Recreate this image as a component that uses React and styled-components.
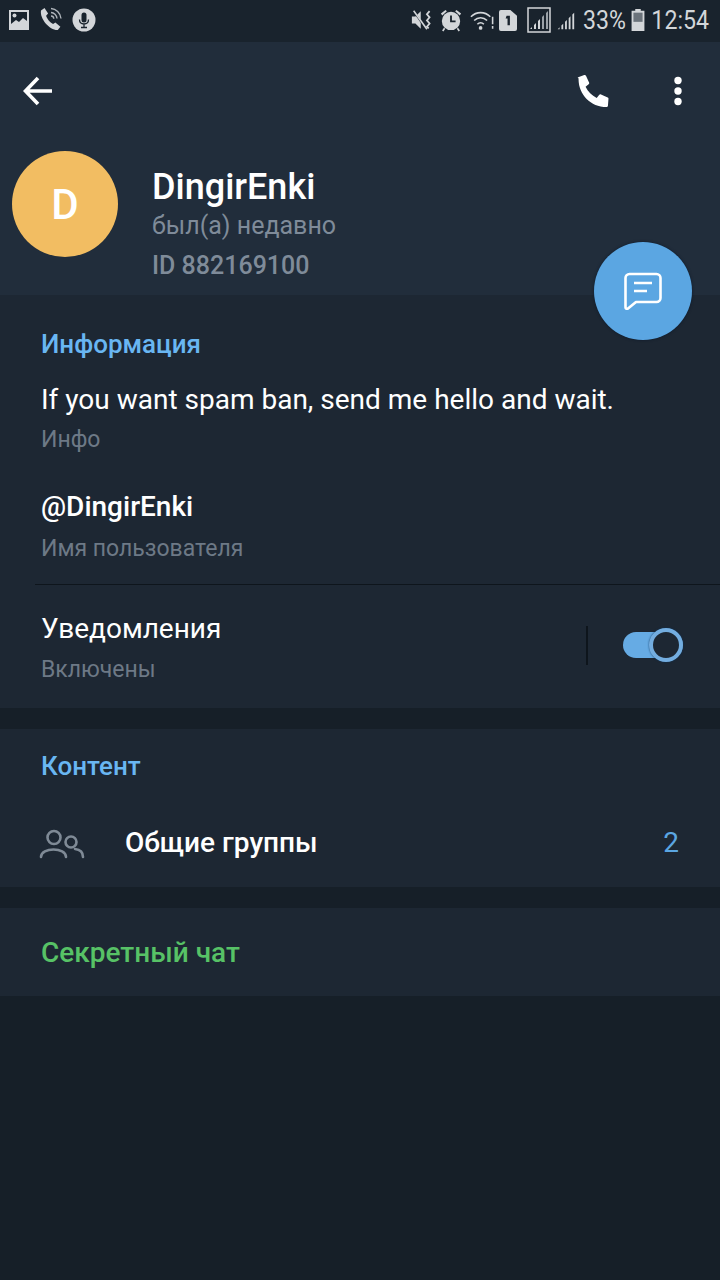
import styled, { createGlobalStyle } from 'styled-components';

const GlobalStyle = createGlobalStyle`
  html, body {
    margin: 0;
    padding: 0;
    background: #161f28;
  }
  * {
    box-sizing: border-box;
  }
`;

const Screen = styled.div`
  position: relative;
  width: 720px;
  height: 1280px;
  overflow: hidden;
  background: #161f28;
  font-family: Roboto, "Noto Sans", sans-serif;
  color: #fff;
`;

const StatusBar = styled.div`
  display: flex;
  align-items: center;
  justify-content: space-between;
  height: 42px;
  padding: 0 11px 2px 8px;
  background: #19232d;
  color: #d3d6d9;
`;

const StatusGroup = styled.div`
  display: flex;
  align-items: center;
  gap: ${props => props.$gap || 0}px;
`;

const StatusSlot = styled.span`
  display: flex;
  margin-left: ${props => props.$left || 0}px;
`;

// the clock digits are narrower than Roboto, so squeeze them a little
const StatusText = styled.span`
  display: block;
  width: ${props => props.$width}px;
  margin-left: ${props => props.$left || 0}px;
  font-size: 26px;
  line-height: 1;
  white-space: nowrap;
  text-align: right;
  direction: rtl;
  transform: scaleX(0.89);
  transform-origin: right center;
`;

const Header = styled.header`
  height: 253px;
  background: #212d3b;
`;

const Toolbar = styled.div`
  display: flex;
  align-items: center;
  justify-content: space-between;
  height: 98px;
  padding: 0 37px 0 22px;
`;

const ToolbarActions = styled.div`
  display: flex;
  align-items: center;
  gap: 62px;
`;

const Profile = styled.div`
  display: flex;
  align-items: flex-start;
  gap: 34px;
  padding: 11px 0 0 12px;
`;

const Avatar = styled.div`
  display: flex;
  align-items: center;
  justify-content: center;
  width: 106px;
  height: 106px;
  border-radius: 50%;
  background: #f2bd62;
  font-size: 42px;
  font-weight: 500;
`;

const ProfileText = styled.div`
  display: flex;
  flex-direction: column;
  padding-top: 15px;
`;

const Name = styled.div`
  font-size: 36px;
  line-height: 42px;
  font-weight: 500;
  height: 41px;
`;

const Muted = styled.div`
  font-size: 25px;
  font-weight: ${props => props.$weight || 400};
  line-height: 30px;
  margin-top: ${props => props.$top || 0}px;
  color: #7f8b99;
`;

const Fab = styled.button`
  position: absolute;
  left: 594px;
  top: 242px;
  display: flex;
  align-items: center;
  justify-content: center;
  width: 98px;
  height: 98px;
  padding: 0;
  border: none;
  border-radius: 50%;
  background: #5ba6e2;
  box-shadow: 0 0 3px rgba(5, 20, 40, 0.7);
`;

const Section = styled.section`
  background: #1d2733;
  padding: ${props => props.$padding};
  margin-bottom: 21px;
`;

const SectionTitle = styled.h2`
  margin: 0;
  font-size: ${props => props.$size || 26}px;
  line-height: 30px;
  font-weight: 500;
  color: ${props => props.$color || '#69b6f2'};
`;

const Field = styled.div`
  padding-left: 41px;
  margin-top: ${props => props.$top || 0}px;
`;

const FieldValue = styled.div`
  font-size: 28px;
  line-height: 34px;
  font-weight: ${props => props.$weight || 400};
`;

const FieldLabel = styled.div`
  font-size: 23px;
  line-height: 28px;
  margin-top: ${props => props.$top || 9}px;
  color: #6d7986;
`;

const Divider = styled.div`
  height: 1px;
  margin: 21px 0 0 35px;
  background: #0e151c;
`;

const NotifyRow = styled.div`
  display: flex;
  align-items: center;
  justify-content: space-between;
  padding: 27px 37px 0 41px;
`;

const NotifyControls = styled.div`
  display: flex;
  align-items: center;
  gap: 35px;
  padding-bottom: 6px;
`;

const Separator = styled.div`
  width: 2px;
  height: 39px;
  background: #0e151c;
`;

const Switch = styled.div`
  position: relative;
  width: 60px;
  height: 26px;
  border-radius: 13px;
  background: #66abe4;
`;

const SwitchKnob = styled.div`
  position: absolute;
  right: 0;
  top: -4px;
  width: 34px;
  height: 34px;
  border: 4px solid #73ade0;
  border-radius: 50%;
  background: #1d2733;
  box-shadow: 0 0 2px rgba(10, 50, 90, 0.9);
`;

const GroupsRow = styled.div`
  display: flex;
  align-items: center;
  padding: 0 41px 0 39px;
  margin-top: 40px;
  height: 42px;
`;

const GroupsLabel = styled.div`
  flex: 1;
  margin-left: 40px;
  font-size: 28px;
  font-weight: 500;
`;

const GroupsCount = styled.div`
  font-size: 28px;
  color: #5ba6e2;
`;

function ImageIcon() {
  return (
    <svg width="22" height="22" viewBox="0 0 22 22">
      <path fill="#d3d6d9" fillRule="evenodd" d="M1 1h20v20H1zM3 3v12l5-4 3 2 4-4 4 3V3z" />
      <circle cx="6.5" cy="6.5" r="2" fill="#d3d6d9" />
    </svg>
  );
}

function CallIcon() {
  return (
    <svg width="24" height="26" viewBox="0 0 24 26" fill="none">
      <path
        fill="#d3d6d9"
        d="M2 3.5 5.5 1l3.6 5.6-2 2.2c.9 3 3.8 6.8 7 8.2l2.3-1.6 5 4.300-2.600 3.300C11 23.500.6 12 2 3.500z"
      />
      <path stroke="#aeb4ba" strokeWidth="1.4" d="M12 1.500c5 .3 9.500 4.500 10 10M12 5.500c3 .2 5.700 2.700 6 6M12 9c1.300 0 2.700 1.300 2.800 2.800" />
    </svg>
  );
}

function MicIcon() {
  return (
    <svg width="24" height="24" viewBox="0 0 24 24">
      <circle cx="12" cy="12" r="11.500" fill="#d3d6d9" />
      <rect x="9.500" y="4.500" width="5" height="10" rx="2.500" fill="#19232d" />
      <path fill="none" stroke="#19232d" strokeWidth="1.300" d="M7.500 11.500c0 6 9 6 9 0M12 16v3M9 19.500h6" />
    </svg>
  );
}

function MuteVibrateIcon() {
  return (
    <svg width="23" height="22" viewBox="0 0 26 24" fill="none">
      <path fill="#d3d6d9" d="M1 8h4l6-6v20l-6-6H1z" />
      <path stroke="#19232d" strokeWidth="2" d="M3 2l14 20" />
      <path stroke="#d3d6d9" strokeWidth="1.800" d="M3 1.500l15 21" />
      <path stroke="#d3d6d9" strokeWidth="2" d="M21 2l-3 3.500 3 3.500-3 3.500 3 3.500-3 3.500 2 2" />
    </svg>
  );
}

function AlarmIcon() {
  return (
    <svg width="22" height="24" viewBox="0 0 24 26" fill="none">
      <circle cx="12" cy="14" r="10" fill="#d3d6d9" />
      <path stroke="#19232d" strokeWidth="2" d="M12 8v6.500h5" />
      <path fill="#d3d6d9" d="M1 6l5-4 1.500 1.500-5 4.500zM23 6l-5-4-1.500 1.500 5 4.500z" />
      <path stroke="#d3d6d9" strokeWidth="1.800" d="M5 22l-2 3M19 22l2 3" />
    </svg>
  );
}

function WifiIcon() {
  return (
    <svg width="24" height="21" viewBox="0 0 26 22" fill="none">
      <g stroke="#d3d6d9" strokeWidth="1.700">
        <path d="M1 7c6-6 15-6 21 0M4.500 11c4-4 10-4 14 0M8 15c2-2 5-2 7 0" />
        <path d="M24.500 7v8M24.500 17v3" />
      </g>
      <circle cx="11.500" cy="19" r="2" fill="#d3d6d9" />
    </svg>
  );
}

function SimIcon() {
  return (
    <svg width="18" height="21" viewBox="0 0 19 22">
      <path fill="#d3d6d9" d="M2 0h10l7 6v14a2 2 0 0 1-2 2H2a2 2 0 0 1-2-2V2a2 2 0 0 1 2-2z" />
      <path fill="#19232d" d="M8 6h3.500v10H9V9H7z" />
    </svg>
  );
}

function SignalBars({ boxed }) {
  const bars = (
    <g fill="#d3d6d9">
      <path d="M3 21l2-2v2zM7 21v-4l2-2v6zM11 21v-8l2-2v10z" />
      <path d="M15 21V9l2-2v14zM19 21V5l2-2v18z" fill={boxed ? '#9aa1a8' : '#d3d6d9'} />
    </g>
  );

  if (boxed) {
    return (
      <svg width="24" height="26" viewBox="0 0 24 26" fill="none">
        <rect x="1" y="1" width="22" height="24" stroke="#d3d6d9" strokeWidth="1.500" />
        <g transform="translate(0 1)">{bars}</g>
      </svg>
    );
  }

  return (
    <svg width="21" height="24" viewBox="0 0 23 24" fill="none">
      <g transform="translate(0 1)">{bars}</g>
    </svg>
  );
}

function BatteryIcon() {
  return (
    <svg width="14" height="22" viewBox="0 0 14 24">
      <path fill="#d3d6d9" d="M4 0h6v2h4v22H0V2h4z" />
      <rect x="2" y="4" width="10" height="10" fill="#6b737b" />
    </svg>
  );
}

function BackIcon() {
  return (
    <svg width="32" height="32" viewBox="0 0 32 32" fill="none">
      <path stroke="#fff" strokeWidth="3.600" d="M30 16H4M16 3 3.500 16 16 29" />
    </svg>
  );
}

function PhoneIcon() {
  return (
    <svg width="35" height="34" viewBox="0 0 33 33">
      <path
        fill="#fff"
        d="M1 3.500 7.500 1c.8-.2 1.300 0 1.700.7l3 6.500c.3.700.2 1.200-.4 1.700l-3 2.500c2.300 4.700 6 8.400 10.800 10.800l2.500-3c.5-.6 1-.7 1.700-.4l6.500 3c.7.400.9.900.7 1.700L30.500 31c-.3.800-.8 1-1.500 1C14 32 2 20 2 5c0-.7-.2-1.200-1-1.500z"
      />
    </svg>
  );
}

function MoreIcon() {
  return (
    <svg width="10" height="30" viewBox="0 0 10 30">
      <circle cx="5" cy="4.500" r="3.700" fill="#fff" />
      <circle cx="5" cy="15" r="3.700" fill="#fff" />
      <circle cx="5" cy="25.500" r="3.700" fill="#fff" />
    </svg>
  );
}

function MessageIcon() {
  return (
    <svg width="38" height="38" viewBox="0 0 38 38" fill="none">
      <path
        stroke="#fff"
        strokeWidth="2.600"
        strokeLinejoin="round"
        d="M1.500 6a4 4 0 0 1 4-4h27a4 4 0 0 1 4 4v20a4 4 0 0 1-4 4H12l-8 6.500c-1 .8-2.500.2-2.500-1z"
      />
      <path stroke="#fff" strokeWidth="2.600" d="M10 11h18M10 19h13" />
    </svg>
  );
}

function GroupIcon() {
  return (
    <svg width="46" height="34" viewBox="0 -4 46 34" fill="none">
      <g stroke="#7f8a96" strokeWidth="2.600" strokeLinecap="round">
        <circle cx="15" cy="8.500" r="6.500" />
        <circle cx="32" cy="13" r="5.500" />
        <path d="M2 28c0-10 25-10 25 0" />
        <path d="M36 20c5 .5 8 3 8 8" />
      </g>
    </svg>
  );
}

export default function App() {
  return (
    <Screen>
      <GlobalStyle />
      <StatusBar>
        <StatusGroup $gap={9}>
          <ImageIcon />
          <CallIcon />
          <MicIcon />
        </StatusGroup>
        <StatusGroup>
          <StatusSlot><MuteVibrateIcon /></StatusSlot>
          <StatusSlot $left={6}><AlarmIcon /></StatusSlot>
          <StatusSlot $left={8}><WifiIcon /></StatusSlot>
          <StatusSlot $left={5}><SimIcon /></StatusSlot>
          <StatusSlot $left={10}><SignalBars boxed /></StatusSlot>
          <StatusSlot $left={4}><SignalBars /></StatusSlot>
          <StatusText $left={8} $width={42}>33%</StatusText>
          <StatusSlot $left={5}><BatteryIcon /></StatusSlot>
          <StatusText $left={8} $width={56}>12:54</StatusText>
        </StatusGroup>
      </StatusBar>

      <Header>
        <Toolbar>
          <BackIcon />
          <ToolbarActions>
            <PhoneIcon />
            <MoreIcon />
          </ToolbarActions>
        </Toolbar>
        <Profile>
          <Avatar>D</Avatar>
          <ProfileText>
            <Name>DingirEnki</Name>
            <Muted $top={4}>был(а) недавно</Muted>
            <Muted $top={10} $weight={500}>ID 882169100</Muted>
          </ProfileText>
        </Profile>
      </Header>

      <Fab>
        <MessageIcon />
      </Fab>

      <Section $padding="34px 0 24px">
        <Field>
          <SectionTitle>Информация</SectionTitle>
        </Field>
        <Field $top={24}>
          <FieldValue>If you want spam ban, send me hello and wait.</FieldValue>
          <FieldLabel>Инфо</FieldLabel>
        </Field>
        <Field $top={36}>
          <FieldValue $weight={500}>@DingirEnki</FieldValue>
          <FieldLabel $top={11}>Имя пользователя</FieldLabel>
        </Field>
        <Divider />
        <NotifyRow>
          <div>
            <FieldValue>Уведомления</FieldValue>
            <FieldLabel $top={10}>Включены</FieldLabel>
          </div>
          <NotifyControls>
            <Separator />
            <Switch>
              <SwitchKnob />
            </Switch>
          </NotifyControls>
        </NotifyRow>
      </Section>

      <Section $padding="22px 0 24px">
        <Field>
          <SectionTitle>Контент</SectionTitle>
        </Field>
        <GroupsRow>
          <GroupIcon />
          <GroupsLabel>Общие группы</GroupsLabel>
          <GroupsCount>2</GroupsCount>
        </GroupsRow>
      </Section>

      <Section $padding="30px 0 28px">
        <Field>
          <SectionTitle $size={28} $color="#57c266">Секретный чат</SectionTitle>
        </Field>
      </Section>
    </Screen>
  );
}
